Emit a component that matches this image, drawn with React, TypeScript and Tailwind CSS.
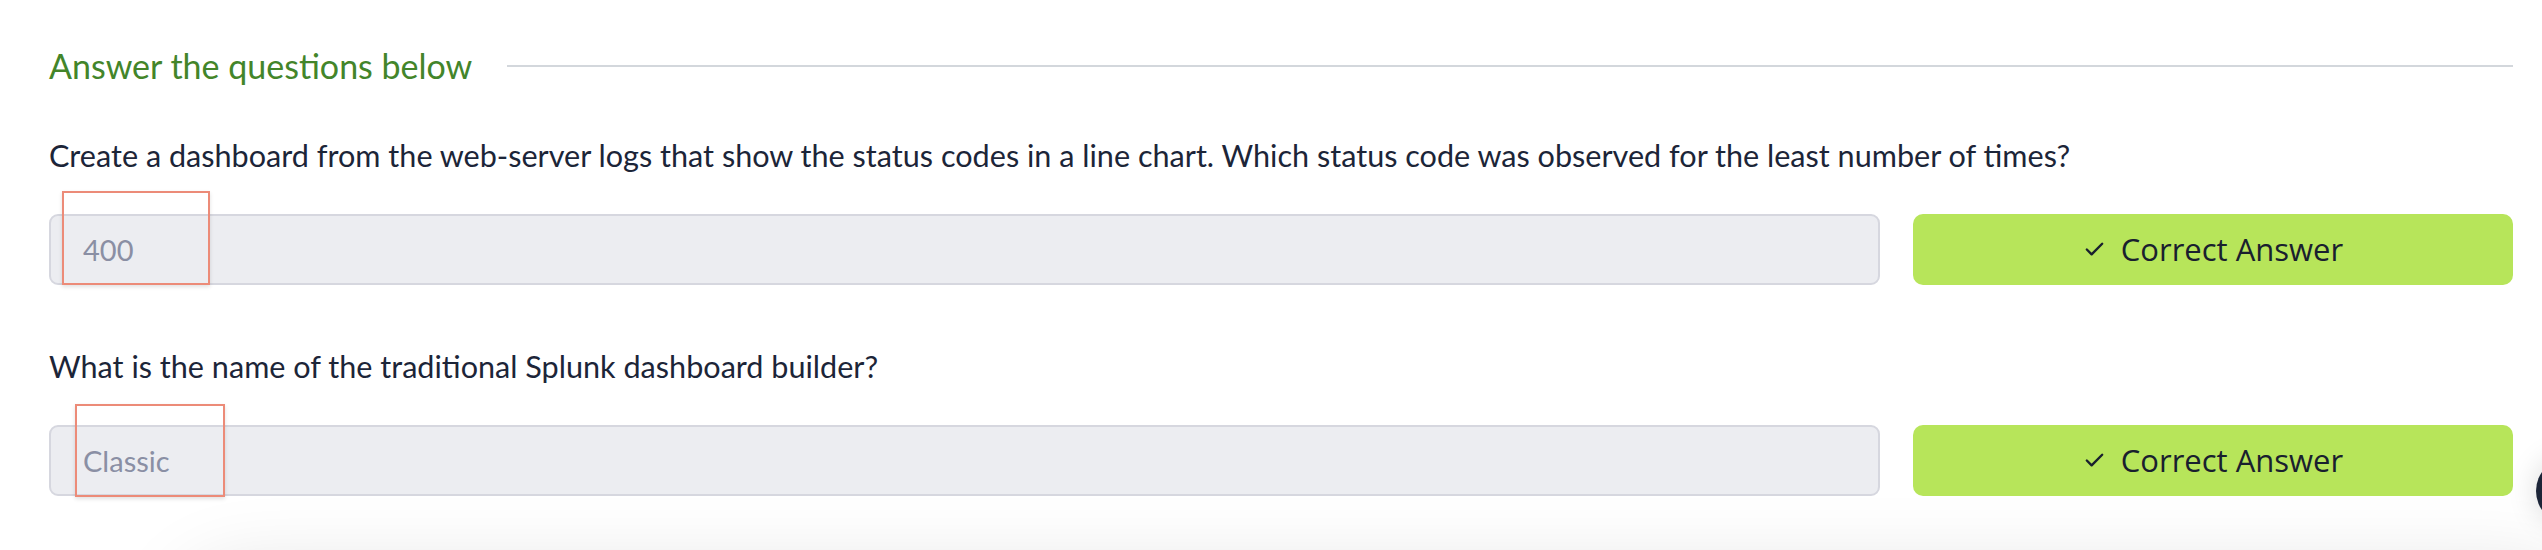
import { Check } from "lucide-react";

const questions = [
  {
    text: "Create a dashboard from the web-server logs that show the status codes in a line chart. Which status code was observed for the least number of times?",
    answer: "400",
  },
  {
    text: "What is the name of the traditional Splunk dashboard builder?",
    answer: "Classic",
  },
];

function QuestionRow({ text, answer }: { text: string; answer: string }) {
  return (
    <div className="h-[211px]">
      <p className="text-[30.6px] leading-[36px] text-[#1c2538] font-['Lato',sans-serif]">
        {text}
      </p>
      <div className="flex gap-[33px] mt-[40px]">
        <div className="flex-1 h-[71px] rounded-[9px] border-2 border-[#d6d7df] bg-[#ecedf1] flex items-center pl-[32px]">
          <span className="text-[29px] text-[#8a8fa4] font-['Lato',sans-serif]">{answer}</span>
        </div>
        <button className="w-[600px] h-[71px] rounded-[10px] bg-[#b7e55a] flex items-center justify-center gap-[15px] text-[#19202e]">
          <Check size={23} strokeWidth={2.5} />
          <span className="text-[31px] font-['Open_Sans',sans-serif]">Correct Answer</span>
        </button>
      </div>
    </div>
  );
}

export default function App() {
  return (
    <div className="relative h-[550px] w-full overflow-hidden bg-white">
      <div className="pl-[49px] pr-[29px] pt-[46px]">
        <div className="flex items-center gap-[35px] h-[40px]">
          <h2 className="text-[34px] leading-[40px] text-[#43852a] font-['Lato',sans-serif]">
            Answer the questions below
          </h2>
          <div className="flex-1 h-[2px] bg-[#d3d7dc]" />
        </div>
        <div className="mt-[52px]">
          {questions.map((q) => (
            <QuestionRow key={q.answer} text={q.text} answer={q.answer} />
          ))}
        </div>
      </div>

      {/* shadow of the card below the fold */}
      <div className="absolute left-[180px] right-[-40px] top-[570px] h-[300px] rounded-[60px] bg-white shadow-[0_0_80px_rgba(0,0,0,0.13)]" />

      {/* floating help button, cut off at the edge */}
      <div className="absolute left-[2536px] top-[458px] w-[66px] h-[66px] rounded-full bg-[#1c2538] shadow-[0_0_30px_rgba(0,0,0,0.15)]" />

      {/* annotation boxes */}
      <div className="absolute left-[62px] top-[191px] w-[148px] h-[94px] border-2 border-[#ec8b78] shadow-[0_2px_4px_rgba(0,0,0,0.12)]" />
      <div className="absolute left-[75px] top-[404px] w-[150px] h-[93px] border-2 border-[#ec8b78] shadow-[0_2px_4px_rgba(0,0,0,0.12)]" />
    </div>
  );
}
